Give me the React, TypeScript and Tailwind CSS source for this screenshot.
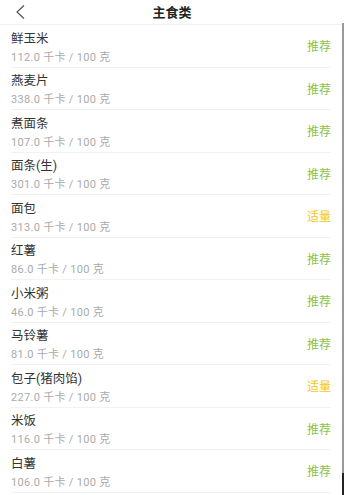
import React from "react";

const items: { name: string; cal: string; tag: "推荐" | "适量" }[] = [
  { name: "鲜玉米", cal: "112.0", tag: "推荐" },
  { name: "燕麦片", cal: "338.0", tag: "推荐" },
  { name: "煮面条", cal: "107.0", tag: "推荐" },
  { name: "面条(生)", cal: "301.0", tag: "推荐" },
  { name: "面包", cal: "313.0", tag: "适量" },
  { name: "红薯", cal: "86.0", tag: "推荐" },
  { name: "小米粥", cal: "46.0", tag: "推荐" },
  { name: "马铃薯", cal: "81.0", tag: "推荐" },
  { name: "包子(猪肉馅)", cal: "227.0", tag: "适量" },
  { name: "米饭", cal: "116.0", tag: "推荐" },
  { name: "白薯", cal: "106.0", tag: "推荐" },
];

export default function App() {
  return (
    <div
      className="relative w-[344px] h-[495px] overflow-hidden bg-white"
      style={{ fontFamily: 'Roboto, "Noto Sans CJK SC", "Noto Sans", sans-serif' }}
    >
      <div className="relative flex h-[25px] items-center justify-center border-b border-[#f0f0f0]">
        <svg
          className="absolute left-[14px] top-[4px]"
          width="12"
          height="16"
          viewBox="0 0 12 16"
          fill="none"
        >
          <path d="M10 1.5 L3 8 L10 14.5" stroke="#555" strokeWidth="1.2" />
        </svg>
        <span className="text-[13px] font-bold text-[#222] leading-none">主食类</span>
      </div>
      <div className="flex flex-col">
        {items.map((it) => (
          <div key={it.name} className="h-[42.5px] px-[11px] pr-[13px]">
            <div className="flex h-full items-center justify-between border-b border-[#f2f2f2]">
              <div className="flex flex-col pt-[3px]">
                <span className="text-[12.5px] leading-[17px] text-[#333]">{it.name}</span>
                <span className="mt-[4px] text-[11px] leading-[14px] tracking-[0.3px] text-[#aaa]">
                  {it.cal} 千卡 / 100 克
                </span>
              </div>
              <span
                className={
                  it.tag === "推荐"
                    ? "mt-[3px] text-[12px] text-[#8bc34a]"
                    : "mt-[3px] text-[12px] text-[#f3c623]"
                }
              >
                {it.tag}
              </span>
            </div>
          </div>
        ))}
      </div>
      <div className="absolute right-0 top-[23px] bottom-0 w-[2px] bg-[#9a9a9a]" />
      <div className="absolute right-0 bottom-0 h-[22px] w-[2px] bg-[#222]" />
    </div>
  );
}
